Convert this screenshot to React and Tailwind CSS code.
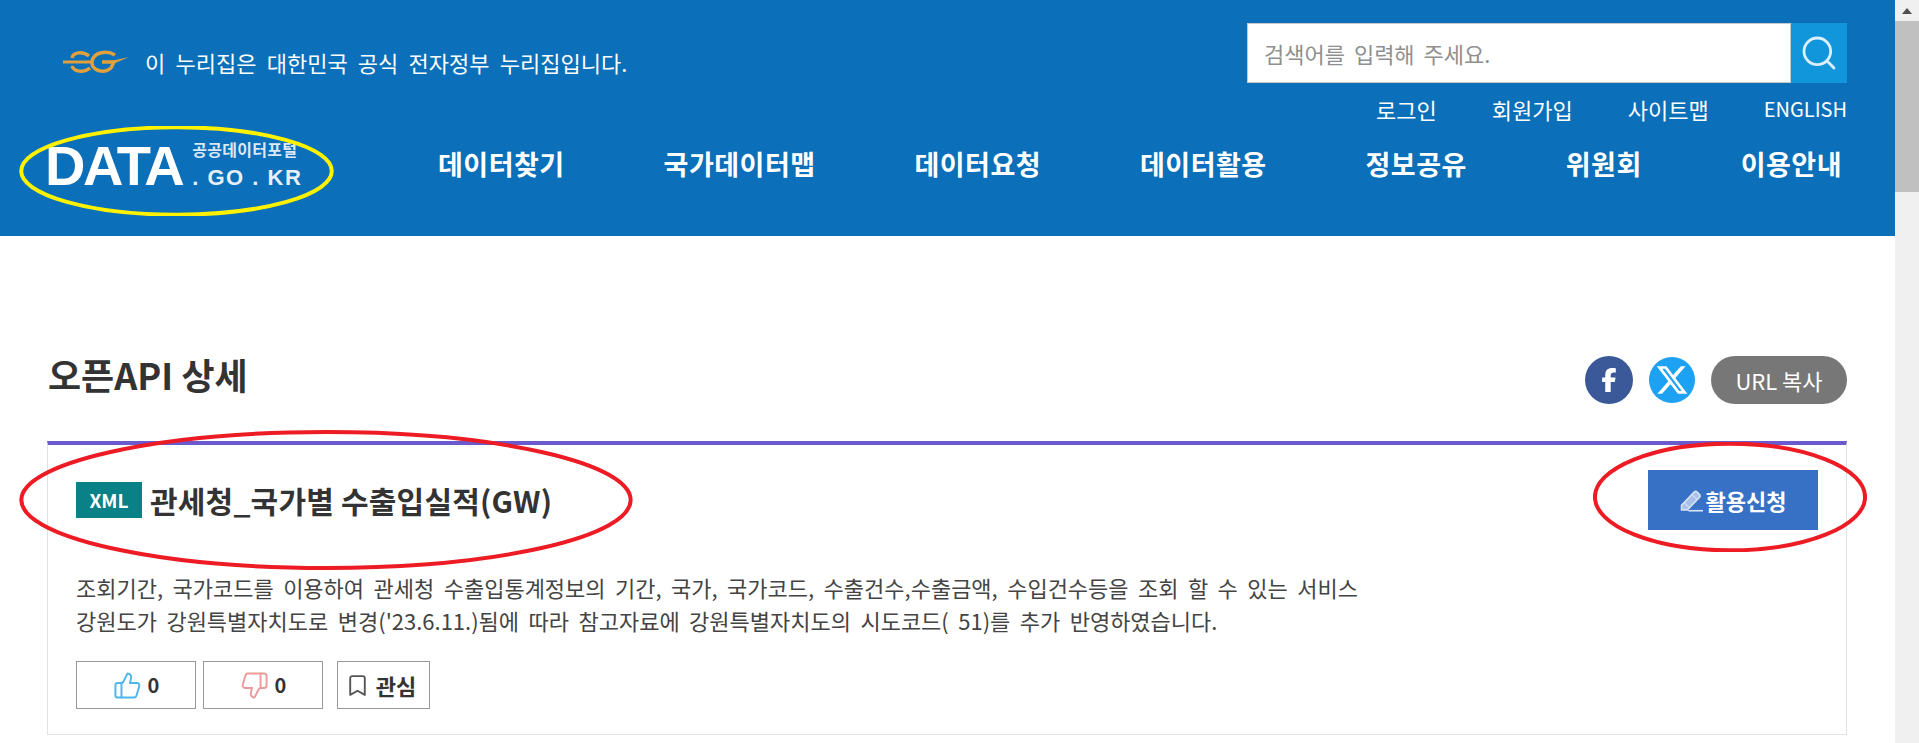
import { ThumbsUp, ThumbsDown, Bookmark, Search } from 'lucide-react';
import { FaFacebookF, FaXTwitter } from 'react-icons/fa6';

const FONT = "font-['Noto_Sans_CJK_KR','Noto_Sans',sans-serif]";
const NAV = ['데이터찾기', '국가데이터맵', '데이터요청', '데이터활용', '정보공유', '위원회', '이용안내'];
const UTIL = ['로그인', '회원가입', '사이트맵'];

function EgLogo() {
  return (
    <svg width="66" height="24" viewBox="0 0 66 24" fill="none" stroke="#e0a13c" strokeWidth="3.5">
      <path d="M0 12 H30" strokeWidth="3" />
      <path d="M26 6 C20 1 10 2 9 8 M9 16 C11 22 21 23 27 18" />
      <path d="M52 5 C44 0 31 2 29 11 C28 21 41 24 48 18 L51 12 H39" />
      <path d="M48 11 L66 7 L50 14 Z" fill="#e0a13c" stroke="none" />
    </svg>
  );
}

function Ellipse({ className, color }) {
  return (
    <svg className={`absolute pointer-events-none ${className}`} viewBox="0 0 100 100" preserveAspectRatio="none">
      <ellipse cx="50" cy="50" rx="49.3" ry="48.5" fill="none" stroke={color} strokeWidth="4" vectorEffect="non-scaling-stroke" />
    </svg>
  );
}

function PencilIcon() {
  return (
    <svg width="23" height="23" viewBox="0 0 22 22" fill="none" stroke="#d5e0f3" strokeWidth="1.6">
      <path d="M1.5 15.5 L13.5 3 a2 2 0 0 1 2.8 0 l2.2 2.2 a2 2 0 0 1 0 2.8 L7 20 H1.5 Z" fill="#a9c1e8" />
      <path d="M4 13 L9 18 M11.5 5.5 L16 10" strokeWidth="1" />
      <path d="M8 20.8 H22" />
    </svg>
  );
}

function Header() {
  return (
    <header className="relative h-[236px] bg-[#0b6fba] pl-[48px] pr-[48px] text-white">
      <div className="flex items-start justify-between pt-[23px]">
        <div className="flex items-center gap-[16px] pl-[15px] pt-[23px]">
          <EgLogo />
          <span className="text-[22px] leading-[32px] [word-spacing:5.3px]">이 누리집은 대한민국 공식 전자정부 누리집입니다.</span>
        </div>
        <div className="flex h-[60px] w-[600px]">
          <div className="flex flex-1 items-center border border-[#c8c8c8] bg-white pl-[16px] text-[22px] text-[#8f8f8f] [word-spacing:4px]">
            검색어를 입력해 주세요.
          </div>
          <div className="flex w-[56px] items-center justify-center bg-[#1296db]">
            <Search size={40} strokeWidth={1.7} className="text-[#dcefff]" />
          </div>
        </div>
      </div>
      <div className="mt-[13px] flex items-center justify-end gap-[55px] text-[22px] leading-[26px]">
        {UTIL.map(u => <span key={u}>{u}</span>)}
        <span className="text-[20px]">ENGLISH</span>
      </div>
      <div className="mt-[22px] flex items-center justify-between pl-[390px] pr-[5px] text-[27px] font-bold leading-[40px] tracking-[0.5px]">
        {NAV.map(n => <span key={n}>{n}</span>)}
      </div>
      {/* logo */}
      <div className="absolute left-[45px] top-[137px] flex items-center gap-[10px] font-['Liberation_Sans',sans-serif] font-bold">
        <span className="text-[56px] leading-[56px] tracking-[-2.5px]">DATA</span>
        <div className="flex flex-col items-start">
          <span className={`${FONT} text-[16px] leading-[24px] tracking-[0.3px] text-[#dbe9f5]`}>공공데이터포털</span>
          <span className="text-[22px] leading-[34px] tracking-[1.5px] text-[#e6f0f8]">. GO . KR</span>
        </div>
      </div>
      <Ellipse className="left-[19px] top-[126px] h-[90px] w-[315px]" color="#fff200" />
    </header>
  );
}

function Scrollbar() {
  return (
    <aside className="flex w-[24px] flex-col items-center bg-[#f0f0f0]">
      <div className="flex h-[21px] w-full items-center justify-center">
        <div className="h-0 w-0 border-x-[5px] border-b-[6px] border-x-transparent border-b-[#505050]" />
      </div>
      <div className="h-[171px] w-full bg-[#c0c0c0]" />
    </aside>
  );
}

function VoteButton({ icon, label, className }) {
  return (
    <button className={`flex h-[48px] items-center justify-center gap-[6px] border border-[#999] text-[20px] font-bold text-[#333] ${className}`}>
      {icon}
      {label}
    </button>
  );
}

function Detail() {
  return (
    <main className="pl-[47px] pr-[48px] pt-[120px] text-[#333]">
      <div className="flex h-[85px] items-start justify-between pl-px">
        <h1 className="text-[36px] font-semibold leading-[36px]">오픈API 상세</h1>
        <div className="flex items-center">
          <div className="flex h-[48px] w-[48px] items-center justify-center rounded-full bg-[#3b5998] text-white">
            <FaFacebookF size={24} />
          </div>
          <div className="ml-[16px] flex h-[46px] w-[46px] items-center justify-center rounded-full bg-[#1da1f2] text-white">
            <FaXTwitter size={34} />
          </div>
          <div className="ml-[16px] flex h-[48px] w-[136px] items-center justify-center rounded-full bg-[#777] text-[22px] text-white">
            URL 복사
          </div>
        </div>
      </div>
      <section className="h-[294px] border border-t-4 border-[#e2e2e2] border-t-[#6a5acd] px-[28px] pt-[25px]">
        <div className="flex items-start justify-between">
          <div className="flex items-center gap-[8px] pt-[10px]">
            <span className="flex h-[36px] w-[66px] items-center justify-center bg-[#0a8087] text-[19px] font-bold text-white">XML</span>
            <h2 className="text-[30px] font-semibold leading-[40px] tracking-[0.2px]">관세청_국가별 수출입실적(GW)</h2>
          </div>
          <button className="flex h-[60px] w-[170px] items-center justify-center gap-[3px] bg-[#3671c6] text-[22px] font-bold text-white">
            <PencilIcon />
            활용신청
          </button>
        </div>
        <div className="mt-[41px] text-[22px] leading-[33px] text-[#444] [word-spacing:4.5px]">
          <p>조회기간, 국가코드를 이용하여 관세청 수출입통계정보의 기간, 국가, 국가코드, 수출건수,수출금액, 수입건수등을 조회 할 수 있는 서비스</p>
          <p>강원도가 강원특별자치도로 변경('23.6.11.)됨에 따라 참고자료에 강원특별자치도의 시도코드( 51)를 추가 반영하였습니다.</p>
        </div>
        <div className="mt-[24px] flex">
          <VoteButton className="w-[120px]" label="0" icon={<ThumbsUp size={29} strokeWidth={1.6} className="text-[#4db6ec]" />} />
          <VoteButton className="ml-[7px] w-[120px]" label="0" icon={<ThumbsDown size={29} strokeWidth={1.6} className="text-[#ef9a9a]" />} />
          <VoteButton className="ml-[14px] w-[93px] gap-0 pr-[6px] text-[22px]" label="관심" icon={<Bookmark size={25} strokeWidth={1.8} className="text-[#555]" />} />
        </div>
      </section>
    </main>
  );
}

export default function App() {
  return (
    <div className={`relative flex h-[743px] overflow-hidden bg-white ${FONT}`}>
      <div className="min-w-0 flex-1">
        <Header />
        <Detail />
      </div>
      <Scrollbar />
      <Ellipse className="left-[17px] top-[430px] h-[140px] w-[618px]" color="#ed1c24" />
      <Ellipse className="left-[1593px] top-[442px] h-[110px] w-[274px]" color="#ed1c24" />
    </div>
  );
}
